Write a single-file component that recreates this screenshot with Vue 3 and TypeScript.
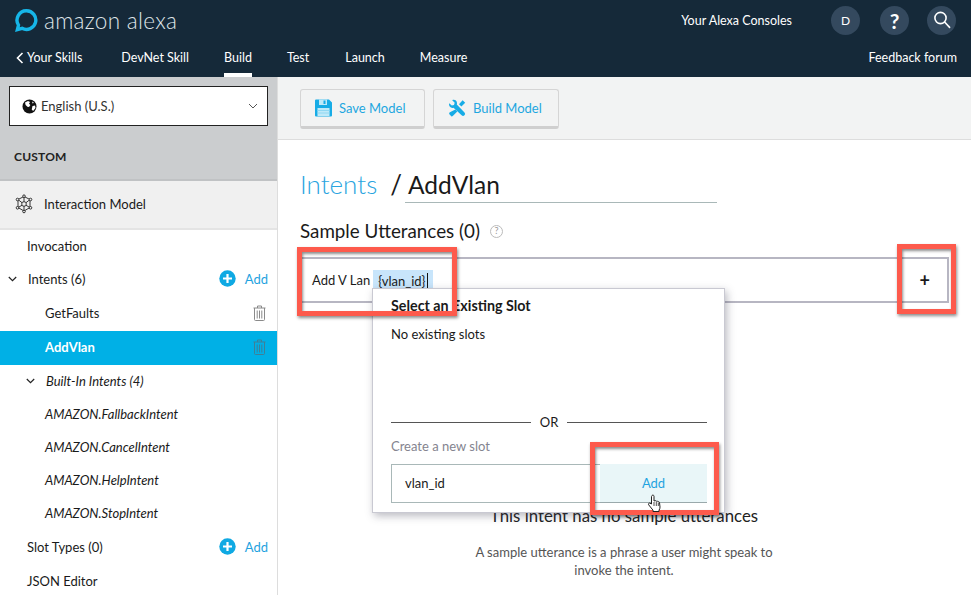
<template>
  <div class="page">
    <header class="topbar">
      <div class="top-row">
        <div class="brand">
          <svg class="ring" width="24" height="24" viewBox="0 0 24 24" fill="none">
            <path d="M12.500 2.800a9.300 9.300 0 1 1-4.400 17.500l-4.700 1.300 1.100-4.500A9.300 9.300 0 0 1 12.500 2.800z" stroke="#16b6e8" stroke-width="3.400" />
          </svg>
          <span class="brand-name">amazon alexa</span>
        </div>
        <span class="consoles">Your Alexa Consoles</span>
        <span class="round round-d">D</span>
        <span class="round round-q">?</span>
        <span class="round round-s">
          <svg width="18" height="18" viewBox="0 0 18 18" fill="none" stroke="#fff" stroke-width="1.600" stroke-linecap="round">
            <circle cx="7.500" cy="7" r="5.600" />
            <path d="M11.600 11l5 5.400" />
          </svg>
        </span>
      </div>
      <nav class="nav-row">
        <a class="nav-back">
          <svg width="8" height="12" viewBox="0 0 8 12" fill="none" stroke="#fff" stroke-width="1.600"><path d="M6.500 1L1.500 6l5 5" /></svg>
          Your Skills
        </a>
        <a v-for="n in NAV" :key="n.label" :class="['nav-link', { on: n.on }]" :style="{ marginLeft: n.gap + 'px' }">{{ n.label }}</a>
        <a class="nav-feedback">Feedback forum</a>
      </nav>
    </header>

    <div class="body">
      <aside class="side">
        <div class="side-gray">
          <div class="locale">
            <svg width="15" height="15" viewBox="0 0 15 15">
              <circle cx="7.500" cy="7.500" r="7" fill="#111" />
              <path d="M3 3.500l3-1.400 2 1-1 1.600 1.400 1.400-1.400 2-1.600-.4L3.600 6zM10.500 7l2.600-.4.4 2.400-2.400 3-1.400-1.400zM10 2.400l2 1.400-1.400.8z" fill="#fff" />
            </svg>
            <span>English (U.S.)</span>
            <svg class="locale-caret" width="10" height="6" viewBox="0 0 10 6" fill="none" stroke="#555" stroke-width="1"><path d="M1 1l4 4 4-4" /></svg>
          </div>
          <div class="custom">CUSTOM</div>
        </div>
        <div class="model-row">
          <svg width="20" height="20" viewBox="0 0 20 20" fill="none" stroke="#222" stroke-width="0.900">
            <path d="M10 2.500l6 3v8l-6 3.500-6-3.500v-8z" />
            <circle cx="10" cy="10" r="2.300" />
            <path d="M10 2.500v5.200M10 12.300v4.700M4 5.500l4 3.200M16 5.500l-4 3.200M4 13.500l4-2.200M16 13.500l-4-2.200" />
            <circle cx="10" cy="2.200" r="1.300" fill="#f0f0f0" />
            <circle cx="10" cy="17.500" r="1.300" fill="#f0f0f0" />
            <circle cx="3.500" cy="5.500" r="1.300" fill="#f0f0f0" />
            <circle cx="16.500" cy="5.500" r="1.300" fill="#f0f0f0" />
            <circle cx="3.500" cy="13.800" r="1.300" fill="#f0f0f0" />
            <circle cx="16.500" cy="13.800" r="1.300" fill="#f0f0f0" />
          </svg>
          <span>Interaction Model</span>
        </div>
        <ul class="tree">
          <li v-for="row in TREE" :key="row.label" :class="['tree-row', row.kind, { active: row.active }]">
            <svg v-if="row.chevron" class="chev" width="9" height="6" viewBox="0 0 9 6" fill="none" stroke="#222" stroke-width="1.200"><path d="M.8 1l3.700 3.700L8.200 1" /></svg>
            <span class="tree-label">{{ row.label }}</span>
            <span v-if="row.add" class="tree-add">
              <svg width="17" height="17" viewBox="0 0 17 17">
                <circle cx="8.500" cy="8.500" r="8.200" fill="#0fa9e3" />
                <path d="M8.500 4v9M4 8.500h9" stroke="#fff" stroke-width="2.200" />
              </svg>
              <span>Add</span>
            </span>
            <svg v-if="row.trash" class="trash" width="13" height="16" viewBox="0 0 13 16" fill="none" :stroke="row.active ? '#3f7f97' : '#8a8a8a'" stroke-width="1">
              <path d="M.5 3h12M4.500 3V1h4v2M1.500 3v11.500a1 1 0 0 0 1 1h8a1 1 0 0 0 1-1V3M4.200 5.500v8M6.500 5.500v8M8.800 5.500v8" />
            </svg>
          </li>
        </ul>
      </aside>

      <main class="main">
        <div class="toolbar">
          <button class="tool-btn save">
            <svg width="17" height="18" viewBox="0 0 17 18">
              <path d="M0 1.500A1 1 0 0 1 1 .5h13l3 3v13a1 1 0 0 1-1 1H1a1 1 0 0 1-1-1z" fill="#17ace6" />
              <rect x="4" y=".5" width="8" height="5.500" fill="#bfe9f8" />
              <rect x="8.500" y="1.500" width="2" height="3.500" fill="#17ace6" />
              <rect x="2.500" y="9" width="12" height="8" fill="#bfe9f8" />
              <path d="M2.500 11.500h12M2.500 14h12" stroke="#8fd7f2" stroke-width="1" />
            </svg>
            Save Model
          </button>
          <button class="tool-btn build">
            <svg width="18" height="18" viewBox="0 0 18 18" fill="#17ace6">
              <path d="M1.200 4.200L3.800 6.600 6 5.900l.7-2.100L4.200 1.200C6.400.2 8.800 1.500 9 4c0 .6 0 1-.2 1.400l7.700 8.100a2 2 0 0 1-2.900 2.800L5.500 8.700C3 9.600.3 7 1.200 4.200z" />
              <path d="M11 5.200L14.600 1.300l2.600 2.400-3.800 3.800zM7.300 10.600l2 2-4.300 4.200a1.500 1.500 0 0 1-2.400-.3l-1-1a1.500 1.500 0 0 1 .3-2.200z" />
            </svg>
            Build Model
          </button>
        </div>

        <div class="content">
          <div class="title-row">
            <a class="crumb">Intents</a>
            <span class="slash">/</span>
            <span class="intent-name">AddVlan</span>
          </div>
          <h2 class="section-title">
            Sample Utterances (0)
            <span class="hint">?</span>
          </h2>

          <div class="utter-wrap">
            <div class="utter">
              <span class="utter-text">Add V Lan</span>
              <span class="utter-slot">{vlan_id}<i class="caret" /></span>
              <span class="utter-plus">+</span>
            </div>

            <div class="popover">
              <div class="pop-title">Select an Existing Slot</div>
              <div class="pop-none">No existing slots</div>
              <div class="pop-or"><span>OR</span></div>
              <div class="pop-label">Create a new slot</div>
              <div class="pop-form">
                <div class="pop-input">vlan_id</div>
                <div class="pop-add">Add</div>
              </div>
            </div>
          </div>

          <div class="empty">
            <h3>This intent has no sample utterances</h3>
            <p>A sample utterance is a phrase a user might speak to<br />invoke the intent.</p>
          </div>
        </div>
      </main>
    </div>

    <div class="mark mark-a" />
    <div class="mark mark-b" />
    <div class="mark mark-c" />
    <svg class="hand" width="16" height="19" viewBox="0 0 16 19">
      <path d="M5 1.500c.9-.8 2-.3 2 .8V7l1-.3c.6-.2 1.200.1 1.400.5.600-.3 1.300 0 1.500.5.700-.3 1.500.1 1.600.8l.5 4.500c.1 1.300-.4 2.300-1 3.200v1.300H6v-1.300L1.800 11c-.8-1-.1-2.100 1-1.900l1.700.9V2.500c0-.4.200-.7.500-1z" fill="#fff" stroke="#222" stroke-width="1" />
      <path d="M7 8v4M9.300 8v4M11.300 8.500V12" stroke="#222" stroke-width=".8" />
    </svg>
  </div>
</template>

<script setup lang="ts">
interface TreeRow {
  label: string
  kind: string
  chevron?: boolean
  add?: boolean
  trash?: boolean
  active?: boolean
}

const NAV = [
  { label: 'DevNet Skill', gap: 39 },
  { label: 'Build', gap: 35, on: true },
  { label: 'Test', gap: 35 },
  { label: 'Launch', gap: 36 },
  { label: 'Measure', gap: 35 },
]

const TREE: TreeRow[] = [
  { label: 'Invocation', kind: 'top first' },
  { label: 'Intents (6)', kind: 'top has-chev', chevron: true, add: true },
  { label: 'GetFaults', kind: 'child', trash: true },
  { label: 'AddVlan', kind: 'child', trash: true, active: true },
  { label: 'Built-In Intents (4)', kind: 'builtin', chevron: true },
  { label: 'AMAZON.FallbackIntent', kind: 'amazon' },
  { label: 'AMAZON.CancelIntent', kind: 'amazon' },
  { label: 'AMAZON.HelpIntent', kind: 'amazon' },
  { label: 'AMAZON.StopIntent', kind: 'amazon' },
  { label: 'Slot Types (0)', kind: 'top', add: true },
  { label: 'JSON Editor', kind: 'top' },
]
</script>

<style>
html, body { margin: 0; background: #fff; }
</style>

<style scoped>
.page {
  position: relative;
  width: 971px;
  height: 595px;
  overflow: hidden;
  font-family: Lato, "Open Sans", sans-serif;
  font-size: 13px;
  color: #1a1a1a;
}

/* Header */
.topbar { height: 77px; background: #152939; color: #fff; }
.top-row { display: flex; align-items: center; height: 40px; padding-right: 15px; }
.brand { display: flex; align-items: center; margin-left: 14px; margin-right: auto; }
.ring { display: block; }
.brand-name { font-size: 22.500px; font-weight: 300; color: #dfe4e8; margin-left: 6px; letter-spacing: 0.3px; }
.consoles { font-size: 12.500px; }
.round {
  display: flex; align-items: center; justify-content: center;
  width: 29px; height: 29px; border-radius: 50%;
  background: #34495e; font-weight: 700;
}
.round-d { margin-left: 39px; font-size: 12px; font-weight: 400; }
.round-q { margin-left: 20px; font-size: 21px; }
.round-s { margin-left: 18px; }

.nav-row { display: flex; height: 37px; padding: 0 14px 0 16px; font-size: 12.500px; }
.nav-row a { display: block; line-height: 35px; }
.nav-back { display: flex !important; align-items: center; gap: 3px; height: 35px; }
.nav-link { position: relative; }
.nav-link.on::after {
  content: ''; position: absolute; left: 0; right: 0; bottom: 0; height: 4px; background: #fff;
}
.nav-link.on { height: 37px; }
.nav-feedback { margin-left: auto; }

/* Sidebar */
.body { display: flex; height: 518px; }
.side { width: 277px; flex-shrink: 0; border-right: 1px solid #ddd; background: #fff; }
.side-gray { background: #cbcdcf; padding: 9px 9px 0; height: 93px; border-bottom: 2px solid #c0c2c4; }
.locale {
  display: flex; align-items: center; height: 38px; padding-left: 12px; gap: 4px;
  background: #fff; border: 1px solid #222; color: #333;
}
.locale-caret { margin-left: auto; margin-right: 9px; }
.custom { font-size: 12px; font-weight: 700; color: #222; letter-spacing: 0.2px; margin: 23px 0 0 5px; }
.model-row {
  display: flex; align-items: center; gap: 10px; height: 45px; padding: 0 0 2px 14px;
  background: #f0f0f0; border-bottom: 2px solid #e4e4e4;
}
.tree { list-style: none; margin: 0; padding: 0; }
.tree-row { display: flex; align-items: center; box-sizing: border-box; height: 34px; padding: 0 9px 3px 27px; }
.tree-row.first { height: 33px; padding-bottom: 1px; }
.tree-row.has-chev { padding-left: 8px; }
.tree-row.child { padding-left: 45px; }
.tree-row.child.active { background: #00b0e6; color: #fff; font-weight: 700; }
.tree-row.builtin { padding-left: 26px; font-style: italic; }
.tree-row.amazon { height: 33px; padding-left: 45px; font-style: italic; }
.chev { margin-right: 11px; }
.tree-add { display: flex; align-items: center; margin-left: auto; gap: 9px; color: #1fa3e0; }
.trash { margin-left: auto; margin-right: 2px; }

/* Main */
.main { flex: 1; min-width: 0; }
.toolbar { display: flex; gap: 8px; height: 63px; padding: 12px 0 0 22px; box-sizing: border-box; background: #f2f3f3; border-bottom: 1px solid #ddd; }
.tool-btn {
  display: flex; align-items: center; gap: 7px;
  height: 40px; padding: 0 14px;
  background: #f2f3f3; border: 1px solid #d5d5d5; border-bottom: 3px solid #cfcfcf; border-radius: 3px;
  font: inherit; color: #1ea7e0;
}
.save { width: 125px; }
.build { width: 126px; }
.content { padding: 0 22px; }
.title-row { display: flex; align-items: baseline; margin-top: 27px; height: 35px; font-size: 26px; line-height: 35px; }
.crumb { color: #2aa4e0; font-weight: 300; }
.slash { margin-left: 13px; color: #1a1a1a; }
.intent-name {
  flex: 1; margin: 0 232px 0 3px; padding-left: 3px; height: 35px; color: #1a1a1a; font-size: 24.500px;
  border-bottom: 1px solid #a9b8b8;
}
.section-title { margin: 16px 0 0; font-size: 18.800px; font-weight: 400; line-height: 26px; display: flex; align-items: center; }
.hint {
  display: inline-flex; align-items: center; justify-content: center;
  width: 11px; height: 11px; margin-left: 10px; border: 1px solid #bbb; border-radius: 50%;
  font-size: 9px; color: #999;
}
.utter-wrap { position: relative; margin-top: 13px; }
.utter {
  display: flex; align-items: center; height: 46px; padding-left: 12px; box-sizing: border-box;
  width: 649px; border: 2px solid #b7b6c2; border-left: 0; background: #fff;
}
.utter-slot {
  display: inline-flex; align-items: center; height: 22px; width: 55px; margin: 2px 0 0 3px; padding-left: 5px;
  background: #c8e5fb;
}
.caret { display: inline-block; width: 1px; height: 16px; background: #111; margin-left: 1px; }
.utter-plus { margin-left: auto; margin-right: 17px; font-size: 18px; font-weight: 700; line-height: 1; }

.popover {
  position: absolute; left: 72px; top: 31px; z-index: 2;
  width: 353px; height: 225px; box-sizing: border-box;
  padding: 8px 17px 0 18px; background: #fff; border: 1px solid #c9c9d2;
  box-shadow: 2px 3px 8px rgba(60, 60, 80, 0.35);
}
.pop-title { font-weight: 700; font-size: 14.300px; line-height: 18px; }
.pop-none { margin-top: 10px; line-height: 18px; }
.pop-or {
  display: flex; align-items: center; gap: 9px; margin-top: 70px; line-height: 18px;
}
.pop-or::before, .pop-or::after { content: ''; flex: 1; height: 1px; background: #555; }
.pop-label { margin-top: 6px; line-height: 18px; color: #84848f; }
.pop-form { display: flex; height: 39px; margin-top: 9px; }
.pop-input {
  width: 209px; box-sizing: border-box; padding-left: 13px; line-height: 37px;
  border: 1px solid #a9b8b8; border-right: 0;
}
.pop-add {
  flex: 1; text-align: center; line-height: 38px; color: #1fa3e0;
  background: #e9f6f8; border-bottom: 1px solid #9aa9ab;
}

.empty { margin-top: 202px; text-align: center; width: 648px; }
.empty h3 { margin: 0; font-size: 16.800px; font-weight: 400; line-height: 22px; color: #222; }
.empty p { margin: 16px 0 0; line-height: 18px; color: #555; }

/* Annotations */
.mark {
  position: absolute; z-index: 3; box-sizing: border-box;
  border: 5px solid #fd5a4c;
  box-shadow: 1px 2px 3px rgba(0, 0, 0, 0.45), inset 1px 2px 3px rgba(0, 0, 0, 0.45);
}
.mark-a { left: 297px; top: 247px; width: 160px; height: 69px; }
.mark-b { left: 897px; top: 244px; width: 59px; height: 70px; }
.mark-c { left: 590px; top: 442px; width: 129px; height: 73px; }
.hand { position: absolute; z-index: 4; left: 647px; top: 494px; }
</style>
